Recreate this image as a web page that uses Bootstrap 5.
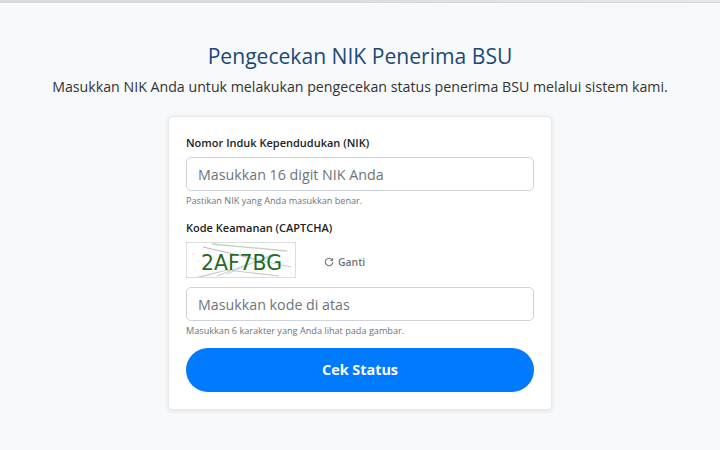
<!DOCTYPE html>
<html lang="id">
<head>
<meta charset="utf-8">
<title>Pengecekan NIK</title>
<link href="https://cdn.jsdelivr.net/npm/bootstrap@5.3.0/dist/css/bootstrap.min.css" rel="stylesheet">
<style>
html,body{height:450px;overflow:hidden}
body{background:#f8f9fa;font-family:"Open Sans","Liberation Sans",sans-serif;color:#333}
.topstrip{height:3px;background:linear-gradient(90deg,#dcdcdc 0,#dcdcdc 50%,#dfe7ea 75%,#dfe9ee 100%);border-bottom:1px solid #d8d8d8}
.pagewrap{padding-top:40px}
.ttl{font-size:21.1px;font-weight:400;color:#1a4a7a;line-height:25px;margin-bottom:8px}
.sub{font-size:14.2px;line-height:22px;color:#333;margin-bottom:18px}
.formcard{width:384px;height:294px;border:1px solid #e6e8ea;border-radius:4px;box-shadow:0 1px 4px rgba(0,0,0,.1);padding:17px 17px 16px;background:#fff}
.lbl{font-size:11px;font-weight:600;color:#222;line-height:18px;margin-bottom:5px}
.inp{height:34px;font-size:14.25px;padding:4px 11px;border:1px solid #ced4da;border-radius:5px;font-family:inherit;color:#333}
.inp::placeholder{color:#6c757d;opacity:1}
.hint{font-size:9.14px;line-height:14px;color:#6c757d;margin-top:3px}
.hint-gap{margin-bottom:11px}
.caprow{margin-bottom:9px}
.capbox{width:110px;height:36px;border:1px solid #ddd;background:#fff;display:block}
.ganti{font-size:10.4px;font-weight:600;color:#6c757d;line-height:14px;margin-left:28px;margin-top:3px}
.cek{height:44px;border-radius:22px;background:#007bff;border:0;font-size:14.4px;font-weight:700;color:#fff;font-family:inherit;margin-top:10px}
</style>
</head>
<body>
<div class="topstrip"></div>
<div class="pagewrap text-center">
  <h1 class="ttl">Pengecekan NIK Penerima BSU</h1>
  <p class="sub">Masukkan NIK Anda untuk melakukan pengecekan status penerima BSU melalui sistem kami.</p>
  <form class="formcard mx-auto text-start">
    <label class="lbl d-block" for="nik">Nomor Induk Kependudukan (NIK)</label>
    <input id="nik" class="form-control inp" type="text" placeholder="Masukkan 16 digit NIK Anda">
    <div class="hint hint-gap">Pastikan NIK yang Anda masukkan benar.</div>
    <label class="lbl d-block" for="kode">Kode Keamanan (CAPTCHA)</label>
    <div class="d-flex align-items-center caprow">
      <svg class="capbox" viewBox="0 0 108 34" xmlns="http://www.w3.org/2000/svg">
        <path d="M16 4 L68 16" stroke="#c9a6cf" fill="none"/>
        <path d="M25 1 L100 8" stroke="#c5cfc0" stroke-width="1.4" fill="none"/>
        <path d="M30 33 L56 23 L92 11" stroke="#b5d3e6" fill="none"/>
        <path d="M40 31 L84 12" stroke="#bcd6e8" fill="none"/>
        <path d="M62 15 L104 24" stroke="#b5d3e6" fill="none"/>
        <path d="M8 35 L40 27 L66 30 L92 33" stroke="#c5cdb9" stroke-width="1.2" fill="none"/>
        <g fill="#cfc7dc"><circle cx="6" cy="11" r=".7"/><circle cx="12" cy="18" r=".6"/><circle cx="22" cy="9" r=".6"/><circle cx="71" cy="5" r=".6"/><circle cx="88" cy="6" r=".6"/><circle cx="101" cy="18" r=".6"/><circle cx="8" cy="27" r=".6"/><circle cx="104" cy="30" r=".6"/><circle cx="48" cy="8" r=".6"/></g>
        <text x="14" y="26.5" font-family="DejaVu Sans" font-size="20.5" fill="#1f6b1f" textLength="81" lengthAdjust="spacingAndGlyphs">2AF7BG</text>
      </svg>
      <span class="ganti d-flex align-items-center">
        <svg class="me-1" width="10" height="10" viewBox="0 0 16 16" fill="none" stroke="#6c757d" stroke-width="1.8" xmlns="http://www.w3.org/2000/svg"><path d="M13.2 5A6 6 0 1 0 14 8"/><path d="M14 1.5V5.5H10" stroke-width="1.6"/></svg>
        Ganti
      </span>
    </div>
    <input id="kode" class="form-control inp" type="text" placeholder="Masukkan kode di atas">
    <div class="hint">Masukkan 6 karakter yang Anda lihat pada gambar.</div>
    <button type="button" class="btn cek w-100">Cek Status</button>
  </form>
</div>
<script src="https://cdn.jsdelivr.net/npm/bootstrap@5.3.0/dist/js/bootstrap.bundle.min.js"></script>
</body>
</html>
